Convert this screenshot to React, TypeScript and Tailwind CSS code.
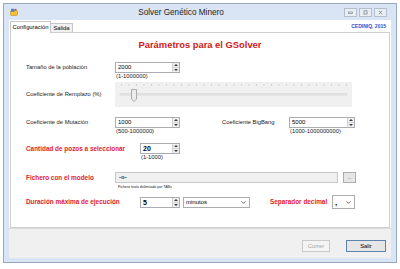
import React from 'react';

// Solver Genético Minero — WinForms-style window (Windows 8 frame), scaled down.

function AppIcon() {
  return (
    <svg width="8" height="8" viewBox="0 0 8 8" className="shrink-0">
      <rect x="0.5" y="2.5" width="7" height="5" rx="1" fill="#f2c230" stroke="#c8901a" strokeWidth="0.6" />
      <rect x="1" y="0.8" width="3.4" height="3" fill="#4f7fd0" />
      <circle cx="5.6" cy="1.8" r="1" fill="#e04a2a" />
    </svg>
  );
}

function CaptionBtn({ kind }: { kind: 'min' | 'max' | 'close' }) {
  return (
    <div className="flex h-[9px] w-[13px] items-center justify-center border border-[#b4bfcd] bg-[#e9eef4]">
      <svg width="7" height="5" viewBox="0 0 7 5">
        {kind === 'min' && <rect x="1.5" y="2" width="4" height="1.6" fill="none" stroke="#7d8896" strokeWidth="0.7" />}
        {kind === 'max' && <rect x="2" y="0.8" width="3" height="3.2" fill="none" stroke="#7d8896" strokeWidth="0.8" />}
        {kind === 'close' && <path d="M2 0.8L5 4.2M5 0.8L2 4.2" stroke="#7d8896" strokeWidth="0.9" />}
      </svg>
    </div>
  );
}

function Spinner() {
  return (
    <div className="flex h-full w-[7px] flex-col border-l border-[#cfcfcf] bg-[#efefef]">
      <div className="flex flex-1 items-center justify-center border-b border-[#d6d6d6]">
        <svg width="4" height="2" viewBox="0 0 4 2">
          <path d="M0 2L2 0L4 2Z" fill="#3a3a3a" />
        </svg>
      </div>
      <div className="flex flex-1 items-center justify-center">
        <svg width="4" height="2" viewBox="0 0 4 2">
          <path d="M0 0L2 2L4 0Z" fill="#3a3a3a" />
        </svg>
      </div>
    </div>
  );
}

function NumBox({ value, width, bold }: { value: string; width: string; bold?: boolean }) {
  return (
    <div className={`flex h-[11px] shrink-0 border border-[#abadb3] bg-white ${width}`}>
      <span
        className={`flex-1 pl-[2px] text-black ${
          bold ? 'text-[7px] font-bold leading-[9px]' : 'text-[6px] leading-[9px]'
        }`}
      >
        {value}
      </span>
      <Spinner />
    </div>
  );
}

function Chevron() {
  return (
    <svg width="5" height="3" viewBox="0 0 5 3">
      <path d="M0.5 0.4L2.5 2.4L4.5 0.4" fill="none" stroke="#3a3a3a" strokeWidth="0.8" />
    </svg>
  );
}

function Label({ text, width, red }: { text: string; width: string; red?: boolean }) {
  return (
    <div
      className={`flex h-[11px] shrink-0 items-center whitespace-nowrap ${width} ${
        red ? 'text-[6.4px] font-bold text-[#e3212b]' : 'text-[5.8px] text-[#1a1a1a]'
      }`}
    >
      {text}
    </div>
  );
}

function Hint({ text }: { text: string }) {
  return <div className="pl-[1px] text-[5.8px] leading-[7px] text-[#1a1a1a]">{text}</div>;
}

function TrackBar() {
  const ticks = Array.from({ length: 31 }, (_, i) => 6 + i * 7.5);
  return (
    <div className="h-[25px] w-[237px] bg-[#f0f0f0]">
      <svg width="237" height="25" viewBox="0 0 237 25">
        {ticks.map((x) => (
          <rect key={x} x={x} y="2" width="0.8" height="1.5" fill="#c4c4c4" />
        ))}
        <rect x="5" y="11.5" width="227" height="1.6" fill="#e4e4e4" stroke="#d2d2d2" strokeWidth="0.5" />
        <path d="M16.5 7.5H21.5V17L19 19.5L16.5 17Z" fill="#ececec" stroke="#8f8f8f" strokeWidth="0.7" />
      </svg>
    </div>
  );
}

export default function App() {
  return (
    <div className="h-[269px] w-[400px] overflow-hidden bg-white pl-[3px] pt-[3px] font-['Liberation_Sans',Arial,sans-serif]">
      <div className="flex h-[260px] w-[394px] flex-col border border-[#98a8bf] bg-[#d9e5f4]">
        {/* caption */}
        <div className="flex h-[16px] shrink-0 items-start pl-[6px] pr-[9px]">
          <div className="pt-[4px]">
            <AppIcon />
          </div>
          <div className="flex-1 pt-[4px] text-center text-[8.2px] leading-[9px] text-[#222]">
            Solver Genético Minero
          </div>
          <div className="flex gap-[2px] pt-[4px]">
            <CaptionBtn kind="min" />
            <CaptionBtn kind="max" />
            <CaptionBtn kind="close" />
          </div>
        </div>

        {/* client area */}
        <div className="mx-[5px] flex flex-1 flex-col bg-white">
          {/* tab strip */}
          <div className="flex h-[12px] shrink-0 items-end pl-[1px]">
            <div className="relative z-10 mb-[-1px] flex h-[12px] w-[41px] items-center justify-center border border-b-0 border-[#c6c6c6] bg-white text-[5.8px] text-black">
              Configuración
            </div>
            <div className="flex h-[9px] w-[22px] items-center justify-center border border-b-0 border-l-0 border-[#c6c6c6] bg-[#f0f0f0] text-[5.8px] text-black">
              Salida
            </div>
            <div className="ml-auto self-center pr-[5px] pt-[1px] text-[5px] font-bold text-[#3b4ccb]">
              CEDINIQ, 2015
            </div>
          </div>

          {/* tab page */}
          <div className="mx-[1px] h-[196px] shrink-0 border border-[#cfcfcf] bg-white pl-[15px]">
            <div className="mt-[6px] h-[12px] pr-[15px] text-center text-[9.4px] font-bold leading-[12px] text-[#d01a1a]">
              Parámetros para el GSolver
            </div>

            <div className="mt-[11px] flex items-start">
              <Label text="Tamaño de la población" width="w-[89px]" />
              <div>
                <NumBox value="2000" width="w-[65px]" />
                <Hint text="(1-1000000)" />
              </div>
            </div>

            <div className="mt-[2px] flex items-center">
              <div className="w-[89px] shrink-0 whitespace-nowrap text-[5.8px] text-[#1a1a1a]">
                Coeficiente de Remplazo (%)
              </div>
              <TrackBar />
            </div>

            <div className="mt-[10px] flex items-start">
              <Label text="Coeficiente de Mutación" width="w-[89px]" />
              <div>
                <NumBox value="1000" width="w-[65px]" />
                <Hint text="(500-1000000)" />
              </div>
              <div className="ml-[42px]">
                <Label text="Coeficiente BigBang" width="w-[67px]" />
              </div>
              <div>
                <NumBox value="5000" width="w-[66px]" />
                <Hint text="(1000-1000000000)" />
              </div>
            </div>

            <div className="mt-[8px] flex items-start">
              <Label text="Cantidad de pozos a seleccionar" width="w-[114px]" red />
              <div>
                <NumBox value="20" width="w-[40px]" bold />
                <Hint text="(1-1000)" />
              </div>
            </div>

            <div className="mt-[11px] flex items-start">
              <Label text="Fichero con el modelo" width="w-[89px]" red />
              <div>
                <div className="flex h-[11px] w-[223px] items-center border border-[#c8c8c8] bg-[#f0f0f0] pl-[3px] text-[6px] font-bold text-[#333]">
                  -o-
                </div>
                <div className="mt-[1px] pl-[3px] text-[3.6px] leading-[6px] text-[#1a1a1a]">
                  Fichero texto delimitado por TABs
                </div>
              </div>
              <div className="ml-[5px] flex h-[11px] w-[13px] items-center justify-center border border-[#adadad] bg-[#e6e6e6] text-[5px] leading-none text-[#555]">
                ...
              </div>
            </div>

            <div className="mt-[5px] flex h-[14px] items-center">
              <Label text="Duración máxima de ejecución" width="w-[114px]" red />
              <NumBox value="5" width="w-[40px]" bold />
              <div className="ml-[3px] flex h-[11px] w-[67px] items-center justify-between border border-[#abadb3] bg-white pl-[2px] pr-[3px] text-[6px] text-black">
                <span>minutos</span>
                <Chevron />
              </div>
              <div className="ml-[20px] w-[62px] whitespace-nowrap text-[6.4px] font-bold text-[#e3212b]">
                Separador decimal
              </div>
              <div className="flex h-[14px] w-[23px] items-center justify-between border border-[#abadb3] bg-white pl-[2px] pr-[3px] text-[8px] font-bold leading-none text-black">
                <span className="pt-[2px]">,</span>
                <Chevron />
              </div>
            </div>
          </div>

          {/* bottom button panel */}
          <div className="flex flex-1 items-start justify-end gap-[16px] border-t border-[#dadada] bg-[#f0f0f0] pr-[5px] pt-[11px]">
            <div className="flex h-[12px] w-[28px] items-center justify-center border border-[#cacaca] bg-[#f4f4f4] text-[5.8px] text-[#a3a3a3]">
              Correr
            </div>
            <div className="flex h-[12px] w-[40px] items-center justify-center border border-[#5b84b1] bg-[#e6e6e6] text-[5.8px] text-black">
              Salir
            </div>
          </div>
        </div>

        <div className="h-[4px] shrink-0" />
      </div>
    </div>
  );
}
